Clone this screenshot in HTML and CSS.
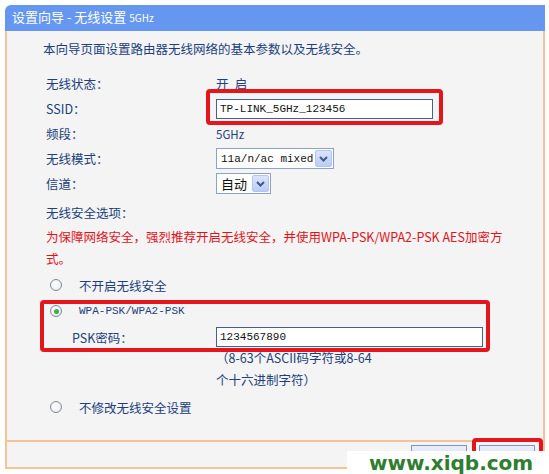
FILE: index.html
```html
<!DOCTYPE html>
<html lang="zh-CN">

<head>
    <meta charset="UTF-8">
    <link rel="stylesheet" href="styles.css">
    <title>设置向导 - 无线设置 5GHz</title>
</head>

<body>
    <div class="wizard">
        <div class="title-bar">设置向导 - 无线设置 <span class="small">5GHz</span></div>
        <div class="panel">
            <p class="intro">本向导页面设置路由器无线网络的基本参数以及无线安全。</p>
            <div class="form">
                <div class="row">
                    <span class="label">无线状态：</span>
                    <span class="value">开&ensp;启</span>
                </div>
                <div class="row">
                    <span class="label">SSID：</span>
                    <span class="field">
                        <input type="text" class="text-input ssid" value="TP-LINK_5GHz_123456">
                        <span class="mark mark-ssid"></span>
                    </span>
                </div>
                <div class="row">
                    <span class="label">频段：</span>
                    <span class="value small-value">5GHz</span>
                </div>
                <div class="row">
                    <span class="label">无线模式：</span>
                    <span class="select mode-select">
                        <span class="sel-text">11a/n/ac mixed</span>
                        <span class="sel-btn"><svg width="9" height="6" viewBox="0 0 9 6"><path d="M1 1 L4.5 4.5 L8 1" fill="none" stroke="#3f5a8a" stroke-width="2"/></svg></span>
                    </span>
                </div>
                <div class="row">
                    <span class="label">信道：</span>
                    <span class="select channel-select">
                        <span class="sel-text">自动</span>
                        <span class="sel-btn"><svg width="9" height="6" viewBox="0 0 9 6"><path d="M1 1 L4.5 4.5 L8 1" fill="none" stroke="#3f5a8a" stroke-width="2"/></svg></span>
                    </span>
                </div>

                <div class="section-title">无线安全选项：</div>
                <p class="warning">为保障网络安全，强烈推荐开启无线安全，并使用WPA-PSK/WPA2-PSK AES加密方<br>式。</p>

                <div class="radio-row first-radio">
                    <span class="radio"></span>
                    <span>不开启无线安全</span>
                </div>

                <div class="secure-group">
                    <div class="radio-row wpa-row">
                        <span class="radio checked"></span>
                        <span>WPA-PSK/WPA2-PSK</span>
                    </div>
                    <div class="psk-row">
                        <span class="psk-label">PSK密码：</span>
                        <input type="text" class="text-input psk" value="1234567890">
                    </div>
                    <span class="mark mark-group"></span>
                </div>
                <p class="hint">（8-63个ASCII码字符或8-64<br>个十六进制字符）</p>

                <div class="radio-row last-radio">
                    <span class="radio"></span>
                    <span>不修改无线安全设置</span>
                </div>
            </div>
        </div>
        <div class="footer">
            <button type="button" class="btn">上一步</button>
            <span class="field">
                <button type="button" class="btn">下一步</button>
                <span class="mark mark-next"></span>
            </span>
        </div>
    </div>
    <div class="watermark">www.xiqb.com</div>
</body>

</html>
```

FILE: styles.css
```css
body {
    margin: 0;
    background-color: #fff;
    font-family: "Noto Sans CJK SC", "Liberation Sans", sans-serif;
    font-size: 12.5px;
    color: #203f7c;
    position: relative;
    width: 549px;
    height: 474px;
    overflow: hidden;
}

.wizard {
    margin: 5px 0 0 5px;
    width: 540px;
}

.title-bar {
    height: 26px;
    line-height: 24px;
    padding-left: 7px;
    background-color: #6597f0;
    color: #fff;
    font-size: 13px;
    border-top-left-radius: 6px;
}

.title-bar .small {
    font-size: 10px;
}

.panel {
    background-color: #f4f4f4;
    border-left: 2px solid #f4c497;
    border-right: 2px solid #f4c497;
    border-bottom: 2px solid #f4c497;
    padding: 7px 0 22px 0;
}

.intro {
    margin: 0 0 11px 36px;
    line-height: 22px;
}

.form {
    padding-left: 39px;
}

.row {
    display: grid;
    grid-template-columns: 170px 1fr;
    align-items: center;
    justify-items: start;
    height: 25px;
}

.small-value {
    font-size: 11.5px;
}

.field {
    position: relative;
    display: inline-block;
}

.text-input {
    box-sizing: border-box;
    height: 20px;
    border: 1px solid #45618f;
    background: #fff;
    font-family: "Liberation Mono", "Noto Sans CJK SC", monospace;
    font-size: 11px;
    color: #111;
    padding: 0 3px;
    display: block;
}

.ssid {
    width: 217px;
}

.psk {
    width: 267px;
}

.mark {
    position: absolute;
    border: 4px solid #e5151c;
    border-radius: 4px;
    pointer-events: none;
}

.mark-ssid {
    top: -10px;
    bottom: -6px;
    left: -10px;
    right: -10px;
}

.select {
    box-sizing: border-box;
    display: inline-flex;
    align-items: center;
    justify-content: space-between;
    height: 21px;
    border: 1px solid #8ea3c4;
    background: #fff;
    color: #111;
    padding: 0 1px 0 4px;
}

.mode-select {
    width: 118px;
    font-family: "Liberation Mono", monospace;
    font-size: 11px;
}

.channel-select {
    width: 55px;
    font-size: 13px;
}

.sel-btn {
    box-sizing: border-box;
    width: 17px;
    height: 17px;
    display: flex;
    align-items: center;
    justify-content: center;
    background: linear-gradient(#dbe5fc, #b9cdf5);
    border: 1px solid #b3c6ec;
    border-radius: 2px;
}

.section-title {
    margin-top: 4px;
    height: 25px;
    line-height: 25px;
}

.warning {
    margin: 1px 0 0 0;
    line-height: 22px;
    color: #e3121a;
}

.radio-row {
    display: flex;
    align-items: center;
    height: 24px;
}

.first-radio {
    margin-top: 3px;
}

.radio {
    box-sizing: border-box;
    width: 12px;
    height: 12px;
    border: 1px solid #7c8a9c;
    border-radius: 50%;
    background: radial-gradient(circle at 40% 40%, #fff, #e4e6ea);
    margin: 0 17px 0 4px;
    display: flex;
    align-items: center;
    justify-content: center;
}

.radio.checked::after {
    content: "";
    width: 5px;
    height: 5px;
    border-radius: 50%;
    background: #35b34a;
}

.secure-group {
    position: relative;
    margin-top: 3px;
    padding: 4px 0;
}

.wpa-row {
    height: 14px;
    font-family: "Liberation Mono", "Noto Sans CJK SC", monospace;
    font-size: 11px;
}

.psk-row {
    display: grid;
    grid-template-columns: 170px 1fr;
    align-items: center;
    justify-items: start;
    height: 22px;
    margin-top: 8px;
}

.psk-label {
    padding-left: 26px;
}

.mark-group {
    top: 0;
    bottom: 0;
    left: -6px;
    width: 450px;
    box-sizing: border-box;
}

.hint {
    margin: -5px 0 0 170px;
    line-height: 22px;
}

.last-radio {
    margin-top: 5px;
    height: 22px;
}

.footer {
    height: 25px;
    background-color: #f4f4f4;
    border-left: 2px solid #f4c497;
    border-right: 2px solid #f4c497;
    border-bottom: 2px solid #f4c497;
    display: flex;
    justify-content: flex-end;
    align-items: flex-start;
    gap: 12px;
    padding-right: 8px;
}

.btn {
    margin-top: 3px;
    width: 56px;
    height: 23px;
    border: 1px solid #7f93c0;
    background: linear-gradient(#e9eefc, #cfd9f5);
    color: #203f7c;
    font-family: "Noto Sans CJK SC", sans-serif;
    font-size: 12.5px;
    line-height: 16px;
    padding: 0;
    vertical-align: top;
}

.mark-next {
    top: -4px;
    bottom: -10px;
    left: -7px;
    right: -8px;
}

.watermark {
    position: absolute;
    left: 347px;
    top: 451px;
    width: 202px;
    height: 23px;
    background: #fff;
    padding-left: 22px;
    box-sizing: border-box;
    font-family: "DejaVu Sans", sans-serif;
    font-weight: bold;
    font-size: 20px;
    line-height: 24px;
    color: #2f7d2f;
}
```
